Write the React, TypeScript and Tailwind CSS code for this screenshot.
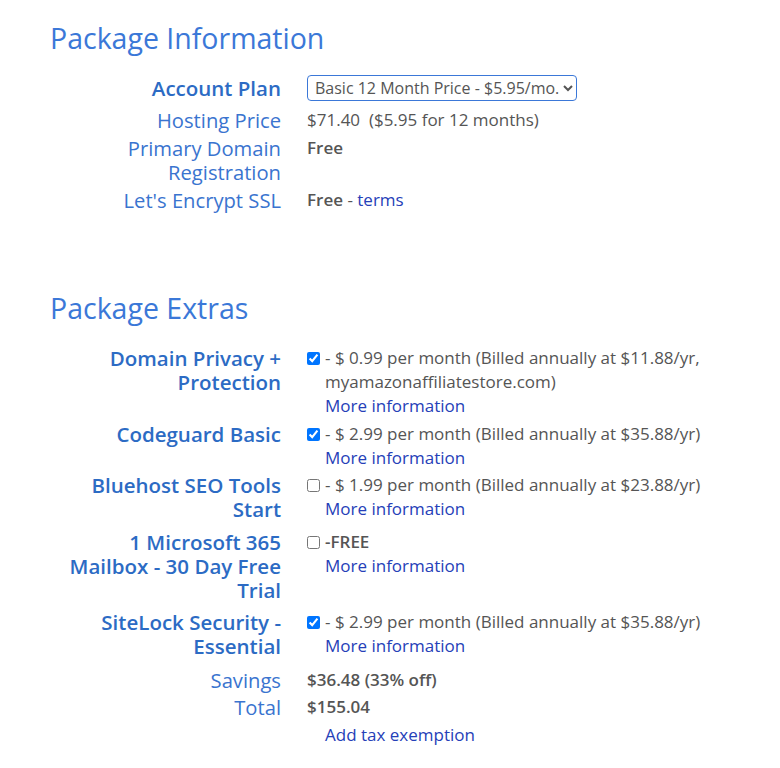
import React from "react";

const labelSemi = "text-right text-[20.5px] leading-[24px] font-semibold text-[#2c6bc4]";
const labelReg = "text-right text-[20.2px] leading-[24px] font-normal text-[#3a74cf]";
const valueCls = "text-[17px] leading-[24px] text-[#555555]";
const linkCls = "text-[#2540b8]";

type Extra = {
  label: string;
  checked: boolean;
  mt: string;
  text: React.ReactNode;
};

const extras: Extra[] = [
  {
    label: "Domain Privacy + Protection",
    checked: true,
    mt: "mt-0",
    text: (
      <>- $ 0.99 per month (Billed annually at $11.88/yr, myamazonaffiliatestore.com)</>
    ),
  },
  {
    label: "Codeguard Basic",
    checked: true,
    mt: "mt-[4px]",
    text: <>- $ 2.99 per month (Billed annually at $35.88/yr)</>,
  },
  {
    label: "Bluehost SEO Tools Start",
    checked: false,
    mt: "mt-[3px]",
    text: <>- $ 1.99 per month (Billed annually at $23.88/yr)</>,
  },
  {
    label: "1 Microsoft 365 Mailbox - 30 Day Free Trial",
    checked: false,
    mt: "mt-[9px]",
    text: <span className="font-semibold">-FREE</span>,
  },
  {
    label: "SiteLock Security - Essential",
    checked: true,
    mt: "mt-[8px]",
    text: <>- $ 2.99 per month (Billed annually at $35.88/yr)</>,
  },
];

export default function App() {
  return (
    <div
      className="min-h-[768px] bg-white pl-[50px] pt-[20px]"
      style={{ fontFamily: '"Open Sans", "Noto Sans", sans-serif' }}
    >
      <h2 className="text-[28.5px] leading-[36px] font-normal text-[#3b78d8]">Package Information</h2>

      <div className="ml-[16px] mt-[16px] grid grid-cols-[215px_420px] gap-x-[26px] gap-y-[4px]">
        <div className={`${labelSemi} flex h-[32px] items-center justify-end`}>Account Plan</div>
        <div className="flex h-[32px] items-center">
          <select
            defaultValue="basic12"
            className="h-[26px] w-[270px] rounded-[4px] border border-[#3b78d8] bg-white pl-[3px] text-[16px] text-[#555555]"
          >
            <option value="basic12">Basic 12 Month Price - $5.95/mo.</option>
          </select>
        </div>

        <div className={labelReg}>Hosting Price</div>
        <div className={valueCls}>$71.40&nbsp; ($5.95 for 12 months)</div>

        <div className={labelReg}>Primary Domain Registration</div>
        <div className={`${valueCls} font-semibold`}>Free</div>

        <div className={labelReg}>Let's Encrypt SSL</div>
        <div className={valueCls}>
          <span className="font-semibold">Free</span> - <span className={linkCls}>terms</span>
        </div>
      </div>

      <h2 className="mt-[78px] text-[28.5px] leading-[36px] font-normal text-[#3b78d8]">Package Extras</h2>

      <div className="ml-[16px] mt-[20px] grid grid-cols-[215px_420px] gap-x-[26px]">
        {extras.map((e) => (
          <React.Fragment key={e.label}>
            <div className={`${labelSemi} ${e.mt}`}>{e.label}</div>
            <div className={`${valueCls} ${e.mt} flex items-start`}>
              <input
                type="checkbox"
                defaultChecked={e.checked}
                className="mt-[6px] ml-0 mr-[5px] h-[13px] w-[13px] shrink-0"
              />
              <div>
                <div>{e.text}</div>
                <div className={linkCls}>More information</div>
              </div>
            </div>
          </React.Fragment>
        ))}

        <div className={`${labelReg} mt-[10px]`}>Savings</div>
        <div className={`${valueCls} mt-[10px] font-semibold`}>$36.48 (33% off)</div>

        <div className={`${labelReg} mt-[3px]`}>Total</div>
        <div className={`${valueCls} mt-[3px] font-semibold`}>$155.04</div>

        <div></div>
        <div className={`${valueCls} mt-[4px] pl-[18px]`}>
          <span className={linkCls}>Add tax exemption</span>
        </div>
      </div>
    </div>
  );
}
